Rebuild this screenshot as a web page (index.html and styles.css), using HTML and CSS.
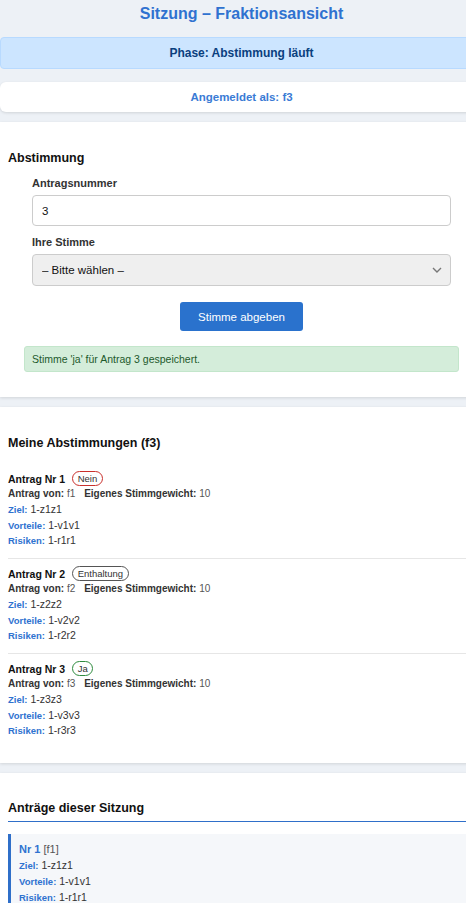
FILE: index.html
```html
<!DOCTYPE html>
<html lang="de">
<head>
<meta charset="utf-8">
<title>Sitzung – Fraktionsansicht</title>
<link rel="stylesheet" href="styles.css">
</head>
<body>
<div class="page">
  <h1 class="title">Sitzung – Fraktionsansicht</h1>
  <div class="phase">Phase: Abstimmung läuft</div>
  <div class="login">Angemeldet als: f3</div>

  <section class="card vote-card">
    <h2 class="card-heading">Abstimmung</h2>
    <form class="vote-form">
      <div class="field">
        <label class="field-label" for="antrag">Antragsnummer</label>
        <input class="text-input" id="antrag" type="text" value="3">
      </div>
      <div class="field">
        <label class="field-label" for="stimme">Ihre Stimme</label>
        <div class="select-wrap">
          <select class="select" id="stimme">
            <option>– Bitte wählen –</option>
          </select>
          <svg class="chevron" width="10" height="6" viewBox="0 0 10 6"><path d="M1 1 L5 5 L9 1" fill="none" stroke="#777" stroke-width="1.4"/></svg>
        </div>
      </div>
      <div class="actions">
        <button class="btn" type="button">Stimme abgeben</button>
      </div>
    </form>
    <div class="alert">Stimme 'ja' für Antrag 3 gespeichert.</div>
  </section>

  <section class="card mine-card">
    <h2 class="card-heading">Meine Abstimmungen (f3)</h2>
    <div class="vote-item">
      <div class="item-title"><span>Antrag Nr 1</span><span class="badge badge-nein">Nein</span></div>
      <div class="item-line"><b>Antrag von:</b> <span class="muted">f1</span>&nbsp;&nbsp; <b>Eigenes Stimmgewicht:</b> <span class="muted">10</span></div>
      <div class="item-line"><span class="key">Ziel:</span> 1-z1z1</div>
      <div class="item-line"><span class="key">Vorteile:</span> 1-v1v1</div>
      <div class="item-line"><span class="key">Risiken:</span> 1-r1r1</div>
    </div>
    <div class="vote-item">
      <div class="item-title"><span>Antrag Nr 2</span><span class="badge badge-enth">Enthaltung</span></div>
      <div class="item-line"><b>Antrag von:</b> <span class="muted">f2</span>&nbsp;&nbsp; <b>Eigenes Stimmgewicht:</b> <span class="muted">10</span></div>
      <div class="item-line"><span class="key">Ziel:</span> 1-z2z2</div>
      <div class="item-line"><span class="key">Vorteile:</span> 1-v2v2</div>
      <div class="item-line"><span class="key">Risiken:</span> 1-r2r2</div>
    </div>
    <div class="vote-item">
      <div class="item-title"><span>Antrag Nr 3</span><span class="badge badge-ja">Ja</span></div>
      <div class="item-line"><b>Antrag von:</b> <span class="muted">f3</span>&nbsp;&nbsp; <b>Eigenes Stimmgewicht:</b> <span class="muted">10</span></div>
      <div class="item-line"><span class="key">Ziel:</span> 1-z3z3</div>
      <div class="item-line"><span class="key">Vorteile:</span> 1-v3v3</div>
      <div class="item-line"><span class="key">Risiken:</span> 1-r3r3</div>
    </div>
  </section>

  <section class="card motions-card">
    <h2 class="card-heading underlined">Anträge dieser Sitzung</h2>
    <div class="motion">
      <div class="motion-title"><span class="motion-nr">Nr 1</span> <span class="muted">[f1]</span></div>
      <div class="item-line"><span class="key">Ziel:</span> 1-z1z1</div>
      <div class="item-line"><span class="key">Vorteile:</span> 1-v1v1</div>
      <div class="item-line"><span class="key">Risiken:</span> 1-r1r1</div>
    </div>
  </section>
</div>
</body>
</html>
```

FILE: styles.css
```css
html, body {
  margin: 0;
  padding: 0;
  overflow-x: hidden;
}
body {
  background: #edf1f6;
  font-family: "Liberation Sans", Arial, sans-serif;
  color: #222;
}
.page {
  width: 483px;
  display: flex;
  flex-direction: column;
}
.title {
  margin: 0;
  padding-top: 5px;
  font-size: 16px;
  line-height: 18px;
  font-weight: bold;
  text-align: center;
  color: #2f72d0;
}
.phase {
  margin-top: 14px;
  background: #cce5ff;
  border: 1px solid #b8daff;
  border-radius: 4px;
  padding: 8px;
  line-height: 14px;
  font-size: 12px;
  font-weight: bold;
  text-align: center;
  color: #0a3f7e;
}
.login {
  margin-top: 13px;
  background: #fff;
  border-radius: 6px;
  box-shadow: 0 1px 3px rgba(0, 0, 0, 0.12);
  height: 30px;
  line-height: 30px;
  font-size: 11.5px;
  font-weight: bold;
  text-align: center;
  color: #3a7bd5;
}
.card {
  background: #fff;
  box-shadow: 0 1px 3px rgba(0, 0, 0, 0.12);
  padding: 8px;
  margin-top: 10px;
}
.card-heading {
  margin: 21px 0 11px;
  font-size: 12.5px;
  line-height: 15px;
  font-weight: bold;
  color: #111;
}
.vote-form {
  margin: 0 24px;
}
.field {
  margin-bottom: 10px;
}
.field-label {
  display: block;
  font-size: 11px;
  line-height: 13px;
  font-weight: bold;
  color: #333;
  margin-bottom: 5px;
}
.text-input {
  display: block;
  box-sizing: border-box;
  width: 100%;
  height: 31px;
  padding: 0 9px;
  border: 1px solid #ccc;
  border-radius: 4px;
  background: #fff;
  font-family: inherit;
  font-size: 11.5px;
  color: #111;
}
.select-wrap {
  position: relative;
}
.select {
  display: block;
  box-sizing: border-box;
  width: 100%;
  height: 32px;
  padding: 0 9px;
  border: 1px solid #ccc;
  border-radius: 4px;
  background: #efefef;
  font-family: inherit;
  font-size: 11.5px;
  color: #111;
  appearance: none;
  -webkit-appearance: none;
}
.chevron {
  position: absolute;
  right: 9px;
  top: 13px;
}
.actions {
  display: flex;
  justify-content: center;
  margin-top: 16px;
}
.btn {
  height: 29px;
  padding: 0 18px;
  border: none;
  border-radius: 3px;
  background: #2a72cd;
  color: #fff;
  font-family: inherit;
  font-size: 11.5px;
}
.alert {
  margin: 15px 16px 17px;
  padding: 6px 7px;
  line-height: 12px;
  font-size: 10.5px;
  background: #d4edda;
  border: 1px solid #c3e6cb;
  border-radius: 3px;
  color: #1d5a2c;
}
.mine-card .card-heading {
  margin-bottom: 20px;
}
.mine-card {
  padding-bottom: 15px;
}
.vote-item {
  padding: 7.5px 0 8.5px;
  border-bottom: 1px solid #e6e6e6;
}
.vote-item:first-of-type {
  padding-top: 0;
}
.vote-item:last-child {
  border-bottom: none;
}
.item-title {
  display: flex;
  align-items: center;
  gap: 7px;
  height: 15px;
  font-size: 10.5px;
  font-weight: bold;
  color: #111;
}
.badge {
  display: inline-block;
  font-weight: normal;
  font-size: 9.5px;
  line-height: 13px;
  padding: 0 4.5px;
  border-radius: 8px;
  color: #333;
  border: 1px solid #555;
}
.badge-nein {
  border-color: #c9302c;
}
.badge-enth {
  border-color: #555;
}
.badge-ja {
  border-color: #2e8b3e;
}
.item-line {
  font-size: 10.5px;
  line-height: 15.75px;
  color: #333;
}
.item-line b {
  font-size: 10px;
  color: #333;
}
.muted {
  color: #555;
  font-size: 10px;
}
.key {
  font-size: 9.5px;
  font-weight: bold;
  color: #2f72d0;
}
.motions-card .underlined {
  margin: 20.5px 0 12px;
  padding-bottom: 5px;
  border-bottom: 1px solid #2f6fc9;
}
.motion {
  background: #f5f7fa;
  border-left: 3px solid #2f6fc9;
  padding: 7px 8px 6px;
}
.motion-title {
  font-size: 11px;
  line-height: 16px;
  margin-bottom: 1px;
}
.motion-nr {
  font-weight: bold;
  color: #2f72d0;
}
.motion-title .muted {
  font-size: 11px;
}
```
